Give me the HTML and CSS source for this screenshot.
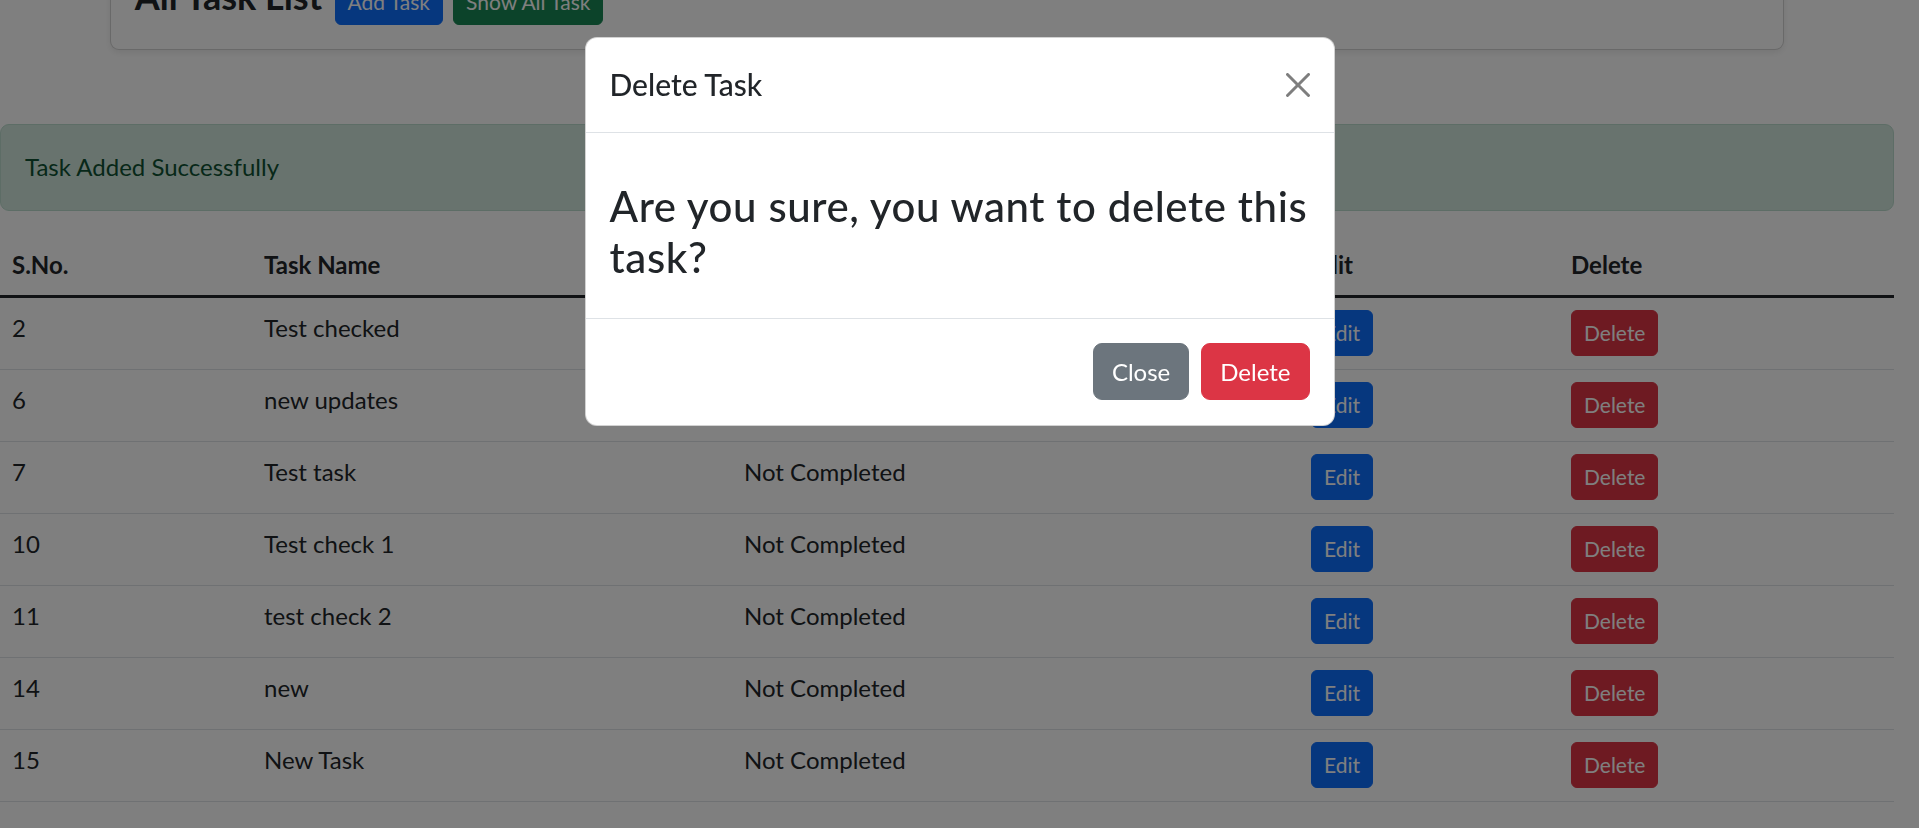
FILE: index.html
```html
<!DOCTYPE html>
<html lang="en">
<head>
<meta charset="utf-8">
<title>All Task List</title>
<link rel="stylesheet" href="styles.css">
</head>
<body>
<main class="page">
  <div class="container">
    <div class="card">
      <div class="card-body title-row">
        <h4 class="page-title">All Task List</h4>
        <a class="btn btn-sm btn-primary" href="#">Add Task</a>
        <a class="btn btn-sm btn-success" href="#">Show All Task</a>
      </div>
    </div>
  </div>

  <div class="alert">Task Added Successfully</div>

  <table class="table">
    <colgroup>
      <col class="c-sno"><col class="c-name"><col class="c-status"><col class="c-edit"><col class="c-del">
    </colgroup>
    <thead>
      <tr><th>S.No.</th><th>Task Name</th><th>Status</th><th>Edit</th><th>Delete</th></tr>
    </thead>
    <tbody>
      <tr><td>2</td><td>Test checked</td><td>Completed</td><td><a class="btn btn-sm btn-primary" href="#">Edit</a></td><td><a class="btn btn-sm btn-danger" href="#">Delete</a></td></tr>
      <tr><td>6</td><td>new updates</td><td>Not Completed</td><td><a class="btn btn-sm btn-primary" href="#">Edit</a></td><td><a class="btn btn-sm btn-danger" href="#">Delete</a></td></tr>
      <tr><td>7</td><td>Test task</td><td>Not Completed</td><td><a class="btn btn-sm btn-primary" href="#">Edit</a></td><td><a class="btn btn-sm btn-danger" href="#">Delete</a></td></tr>
      <tr><td>10</td><td>Test check 1</td><td>Not Completed</td><td><a class="btn btn-sm btn-primary" href="#">Edit</a></td><td><a class="btn btn-sm btn-danger" href="#">Delete</a></td></tr>
      <tr><td>11</td><td>test check 2</td><td>Not Completed</td><td><a class="btn btn-sm btn-primary" href="#">Edit</a></td><td><a class="btn btn-sm btn-danger" href="#">Delete</a></td></tr>
      <tr><td>14</td><td>new</td><td>Not Completed</td><td><a class="btn btn-sm btn-primary" href="#">Edit</a></td><td><a class="btn btn-sm btn-danger" href="#">Delete</a></td></tr>
      <tr><td>15</td><td>New Task</td><td>Not Completed</td><td><a class="btn btn-sm btn-primary" href="#">Edit</a></td><td><a class="btn btn-sm btn-danger" href="#">Delete</a></td></tr>
    </tbody>
  </table>
</main>

<div class="modal-backdrop"></div>
<div class="modal">
  <div class="modal-dialog">
    <div class="modal-content">
      <div class="modal-header">
        <h5 class="modal-title">Delete Task</h5>
        <button class="btn-close" type="button" aria-label="Close">
          <svg viewBox="0 0 16 16" width="24" height="24" aria-hidden="true"><path d="M.293.293a1 1 0 0 1 1.414 0L8 6.586 14.293.293a1 1 0 1 1 1.414 1.414L9.414 8l6.293 6.293a1 1 0 0 1-1.414 1.414L8 9.414l-6.293 6.293a1 1 0 0 1-1.414-1.414L6.586 8 .293 1.707a1 1 0 0 1 0-1.414z"/></svg>
        </button>
      </div>
      <div class="modal-body">
        <h3 class="confirm-text">Are you sure, you want to delete this task?</h3>
      </div>
      <div class="modal-footer">
        <button class="btn btn-secondary" type="button">Close</button>
        <button class="btn btn-danger" type="button">Delete</button>
      </div>
    </div>
  </div>
</div>
</body>
</html>
```

FILE: styles.css
```css
*, *::before, *::after { box-sizing: border-box; }

html { font-size: 24px; }

body {
  margin: 0;
  padding-right: 25.5px;
  font-family: Lato, "Noto Sans", sans-serif;
  font-size: 24px;
  line-height: 1.5;
  color: #212529;
  background: #fff;
  overflow: hidden;
  height: 828px;
}

.page { margin-top: -50px; }

.container {
  max-width: 1710px;
  margin: 0 auto;
  padding: 0 18px;
}

.card {
  border: 1px solid rgba(0, 0, 0, .175);
  border-radius: 9px;
  background: #fff;
  box-shadow: 0 3px 6px rgba(0, 0, 0, .075);
  margin-bottom: 73.5px;
}

.card-body { padding: 24px; }

.title-row {
  display: flex;
  align-items: baseline;
}

.page-title {
  margin: 0 12.5px 0 0;
  font-size: 36px;
  line-height: 1.2;
  font-weight: 700;
}

.title-row .btn + .btn { margin-left: 10px; }

.btn {
  display: inline-block;
  font-family: inherit;
  font-size: 24px;
  line-height: 36px;
  font-weight: 400;
  padding: 9.5px 18px;
  border: 1px solid transparent;
  border-radius: 9px;
  color: #fff;
  text-decoration: none;
  text-align: center;
  cursor: pointer;
}

.btn-sm {
  font-size: 21px;
  line-height: 32px;
  padding: 6px 12px;
  border-radius: 6px;
}

.btn-primary { background: #0d6efd; border-color: #0d6efd; }
.btn-success { background: #198754; border-color: #198754; }
.btn-danger { background: #dc3545; border-color: #dc3545; }
.btn-secondary { background: #6c757d; border-color: #6c757d; }

.alert {
  padding: 24px 24px 25px;
  margin-bottom: 24px;
  border: 1px solid #badbcc;
  border-radius: 9px;
  background: #d1e7dd;
  color: #0f5132;
  line-height: 36px;
}

.table {
  width: 100%;
  border-collapse: collapse;
  table-layout: fixed;
  margin-bottom: 24px;
  color: #212529;
}

.c-sno { width: 252px; }
.c-name { width: 480px; }
.c-status { width: 567px; }
.c-edit { width: 260px; }

.table th,
.table td {
  padding: 12px 12px 13px;
  text-align: left;
  vertical-align: top;
  line-height: 36px;
  border-bottom: 1px solid #dee2e6;
}

.table thead th {
  padding: 12px;
  font-weight: 700;
  border-bottom: 3px solid #212529;
}

.table td .btn-sm { vertical-align: top; }

.modal-backdrop {
  position: fixed;
  inset: 0;
  background: rgba(0, 0, 0, .5);
  z-index: 10;
}

.modal {
  position: fixed;
  inset: 0;
  z-index: 20;
}

.modal-dialog {
  width: 750px;
  margin: 37px auto 0;
}

.modal-content {
  background: #fff;
  border: 1px solid rgba(0, 0, 0, .175);
  border-radius: 12px;
}

.modal-header {
  display: flex;
  align-items: center;
  padding: 24px 24px 25px;
  border-bottom: 1px solid #dee2e6;
}

.modal-title {
  margin: 0;
  font-size: 30px;
  line-height: 45px;
  font-weight: 500;
}

.btn-close {
  box-sizing: content-box;
  width: 24px;
  height: 24px;
  padding: 12px;
  margin: -12px -12px -12px auto;
  border: 0;
  background: transparent;
  opacity: .5;
  display: flex;
  align-items: center;
  justify-content: center;
  cursor: pointer;
}

.btn-close svg { display: block; fill: #000; }

.modal-body { padding: 24px; }

.confirm-text {
  margin: 24px 0 12px;
  font-size: 42px;
  line-height: 50.5px;
  font-weight: 500;
  letter-spacing: 0.6px;
}

.modal-footer {
  display: flex;
  justify-content: flex-end;
  align-items: center;
  padding: 18px 18px 19px;
  border-top: 1px solid #dee2e6;
}

.modal-footer .btn { margin: 6px; }
```
